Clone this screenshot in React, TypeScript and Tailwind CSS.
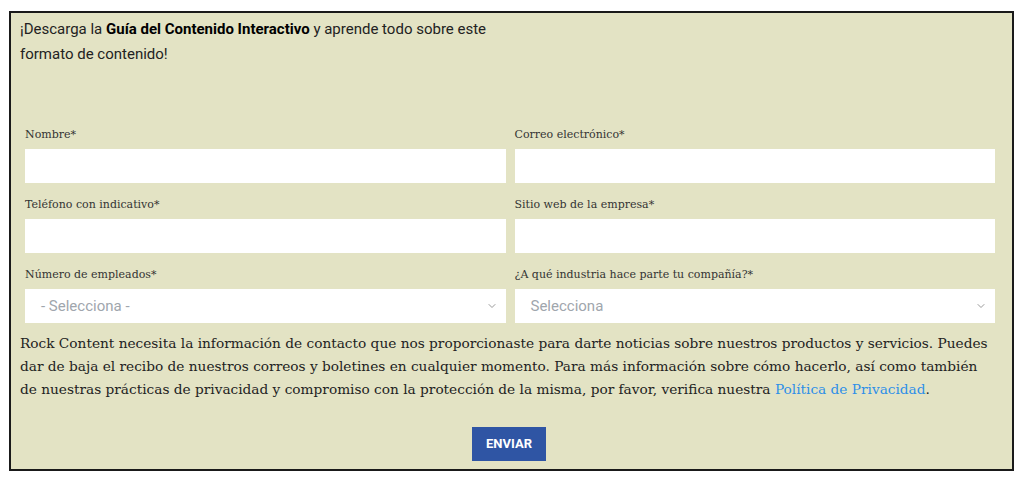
import { ChevronDown } from 'lucide-react'

function Field({ label }: { label: string }) {
  return (
    <div className="flex flex-col">
      <label className="mb-[7px] h-[14px] font-['DejaVu_Serif',serif] text-[11px] leading-[14px] text-[#333]">{label}</label>
      <input className="h-[34px] w-full border-0 bg-white outline-none" />
    </div>
  )
}

function SelectField({ label, placeholder }: { label: string; placeholder: string }) {
  return (
    <div className="flex flex-col">
      <label className="mb-[7px] h-[14px] font-['DejaVu_Serif',serif] text-[11px] leading-[14px] text-[#333]">{label}</label>
      <div className="flex h-[34px] items-center justify-between bg-white pl-4 pr-2">
        <span className="font-['Roboto',sans-serif] text-[15px] text-[#a0a6ad]">{placeholder}</span>
        <ChevronDown className="h-3 w-3 text-[#999]" strokeWidth={2} />
      </div>
    </div>
  )
}

export default function App() {
  return (
    <div className="h-[479px] w-[1021px] bg-white pl-[9px] pt-[11px]">
      <div className="h-[460px] w-[1005px] border-2 border-[#1a1a1a] bg-[#e3e3c4] pl-[9px] pr-[17px] pt-[4px]">
        <p className="w-[490px] font-['Roboto',sans-serif] text-[15px] leading-[25px] text-[#222]">
          ¡Descarga la <b className="font-bold text-black">Guía del Contenido Interactivo</b> y aprende todo sobre este formato de contenido!
        </p>
        <div className="mt-[61px] grid grid-cols-2 gap-x-[9px] gap-y-[15px] pl-[5px]">
          <Field label="Nombre*" />
          <Field label="Correo electrónico*" />
          <Field label="Teléfono con indicativo*" />
          <Field label="Sitio web de la empresa*" />
          <SelectField label="Número de empleados*" placeholder="- Selecciona -" />
          <SelectField label="¿A qué industria hace parte tu compañía?*" placeholder="Selecciona" />
        </div>
        <p className="mt-[9px] font-['DejaVu_Serif',serif] text-[13.7px] leading-[23px] text-[#222]">
          Rock Content necesita la información de contacto que nos proporcionaste para darte noticias sobre nuestros productos y servicios. Puedes dar de baja el recibo de nuestros correos y boletines en cualquier momento. Para más información sobre cómo hacerlo, así como también de nuestras prácticas de privacidad y compromiso con la protección de la misma, por favor, verifica nuestra{' '}
          <a className="text-[#2e8fe8]">Política de Privacidad</a>.
        </p>
        <div className="mt-[26px] flex justify-center pl-[3px]">
          <button className="h-[34px] w-[74px] bg-[#2f55a4] font-['Roboto',sans-serif] text-[13px] font-bold text-white">ENVIAR</button>
        </div>
      </div>
    </div>
  )
}
